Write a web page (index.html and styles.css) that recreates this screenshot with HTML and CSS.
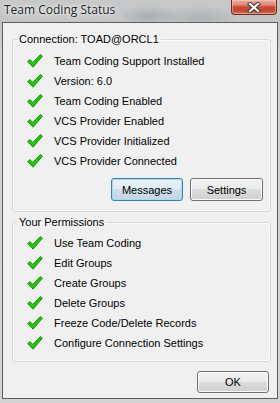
FILE: index.html
```html
<!DOCTYPE html>
<html>
<head>
<meta charset="utf-8">
<link rel="stylesheet" href="styles.css">
</head>
<body>
<div class="window">
  <div class="titlebar">
    <span class="title">Team Coding Status</span>
    <div class="close">
      <svg width="14" height="11" viewBox="0 0 14 11">
        <path d="M3 2 L11 9 M11 2 L3 9" stroke="#3b3b3b" stroke-width="4.2" stroke-linecap="square" fill="none"/>
        <path d="M3 2 L11 9 M11 2 L3 9" stroke="#ffffff" stroke-width="2.2" stroke-linecap="square" fill="none"/>
      </svg>
    </div>
  </div>
  <div class="client">
    <fieldset class="group group-conn">
      <legend>Connection: TOAD@ORCL1</legend>
      <div class="row"><svg class="check" viewBox="0 0 16 14"><path d="M0.6 7.6 L3 5.6 L5.8 8.4 L13.4 0.6 L15.4 2.2 L6 13.2 Z"/></svg><span>Team Coding Support Installed</span></div>
      <div class="row"><svg class="check" viewBox="0 0 16 14"><path d="M0.6 7.6 L3 5.6 L5.8 8.4 L13.4 0.6 L15.4 2.2 L6 13.2 Z"/></svg><span>Version: 6.0</span></div>
      <div class="row"><svg class="check" viewBox="0 0 16 14"><path d="M0.6 7.6 L3 5.6 L5.8 8.4 L13.4 0.6 L15.4 2.2 L6 13.2 Z"/></svg><span>Team Coding Enabled</span></div>
      <div class="row"><svg class="check" viewBox="0 0 16 14"><path d="M0.6 7.6 L3 5.6 L5.8 8.4 L13.4 0.6 L15.4 2.2 L6 13.2 Z"/></svg><span>VCS Provider Enabled</span></div>
      <div class="row"><svg class="check" viewBox="0 0 16 14"><path d="M0.6 7.6 L3 5.6 L5.8 8.4 L13.4 0.6 L15.4 2.2 L6 13.2 Z"/></svg><span>VCS Provider Initialized</span></div>
      <div class="row"><svg class="check" viewBox="0 0 16 14"><path d="M0.6 7.6 L3 5.6 L5.8 8.4 L13.4 0.6 L15.4 2.2 L6 13.2 Z"/></svg><span>VCS Provider Connected</span></div>
      <div class="buttons">
        <button class="btn btn-default">Messages</button>
        <button class="btn">Settings</button>
      </div>
    </fieldset>
    <fieldset class="group group-perm">
      <legend>Your Permissions</legend>
      <div class="row"><svg class="check" viewBox="0 0 16 14"><path d="M0.6 7.6 L3 5.6 L5.8 8.4 L13.4 0.6 L15.4 2.2 L6 13.2 Z"/></svg><span>Use Team Coding</span></div>
      <div class="row"><svg class="check" viewBox="0 0 16 14"><path d="M0.6 7.6 L3 5.6 L5.8 8.4 L13.4 0.6 L15.4 2.2 L6 13.2 Z"/></svg><span>Edit Groups</span></div>
      <div class="row"><svg class="check" viewBox="0 0 16 14"><path d="M0.6 7.6 L3 5.6 L5.8 8.4 L13.4 0.6 L15.4 2.2 L6 13.2 Z"/></svg><span>Create Groups</span></div>
      <div class="row"><svg class="check" viewBox="0 0 16 14"><path d="M0.6 7.6 L3 5.6 L5.8 8.4 L13.4 0.6 L15.4 2.2 L6 13.2 Z"/></svg><span>Delete Groups</span></div>
      <div class="row"><svg class="check" viewBox="0 0 16 14"><path d="M0.6 7.6 L3 5.6 L5.8 8.4 L13.4 0.6 L15.4 2.2 L6 13.2 Z"/></svg><span>Freeze Code/Delete Records</span></div>
      <div class="row"><svg class="check" viewBox="0 0 16 14"><path d="M0.6 7.6 L3 5.6 L5.8 8.4 L13.4 0.6 L15.4 2.2 L6 13.2 Z"/></svg><span>Configure Connection Settings</span></div>
    </fieldset>
    <div class="footer">
      <button class="btn btn-ok">OK</button>
    </div>
  </div>
</div>
</body>
</html>
```
FILE: styles.css
```css
html, body {
  margin: 0;
  padding: 0;
}
body {
  width: 280px;
  height: 403px;
  overflow: hidden;
  font-family: "Liberation Sans", Arial, sans-serif;
  font-size: 11px;
  color: #000;
}
.window {
  width: 280px;
  height: 403px;
  box-sizing: border-box;
  display: flex;
  flex-direction: column;
  background:
    radial-gradient(ellipse 30px 10px at 150px 16px, rgba(120,130,135,0.35), rgba(120,130,135,0)),
    radial-gradient(ellipse 40px 12px at 200px 18px, rgba(130,135,140,0.3), rgba(130,135,140,0)),
    linear-gradient(180deg, #c6c8c9 0px, #c2c4c5 22px, #cfd1d2 60px, #d2d3d4 100%);
}
.titlebar {
  height: 22px;
  display: flex;
  justify-content: space-between;
  align-items: flex-start;
  padding: 0 3px 0 4px;
  flex: none;
}
.title {
  font-family: "Open Sans", "Noto Sans", sans-serif;
  font-size: 12px;
  line-height: 20px;
  color: #1e1e1e;
  text-shadow: 0 0 6px #ffffff, 0 0 3px rgba(255,255,255,0.9);
}
.close {
  width: 46px;
  height: 15px;
  box-sizing: border-box;
  margin-left: auto;
  border: 1px solid #6b2a20;
  border-top: none;
  border-radius: 0 0 4px 4px;
  background: linear-gradient(180deg, #e9ab9c 0%, #de8b78 35%, #c64a34 50%, #c24630 75%, #d7725c 100%);
  box-shadow: inset 0 0 0 1px rgba(255,220,210,0.45);
  display: flex;
  align-items: center;
  justify-content: center;
}
.close svg {
  display: block;
}
.client {
  flex: 1;
  margin: 0 2px 4px 2px;
  border: 1px solid #5c5c5c;
  background: #f0f0f0;
  display: flex;
  flex-direction: column;
}
.group {
  border: 1px solid #d3d9dd;
  border-radius: 3px;
  box-shadow: inset 0 0 0 1px #fbfbfb;
  padding: 0;
  min-width: 0;
}
.group legend {
  margin-left: 4px;
  padding: 0 2px;
  line-height: 14px;
  height: 14px;
}
.group-conn {
  margin: 9px 6px 0 9px;
  padding: 5px 0 10px 0;
}
.group-perm {
  margin: 3px 6px 0 9px;
  padding: 4px 0 8px 0;
}
.row {
  height: 20px;
  display: flex;
  align-items: center;
  gap: 11px;
  padding-left: 14px;
}
.check {
  width: 16px;
  height: 14px;
  flex: none;
  fill: #25c40f;
  stroke: #0d8a05;
  stroke-width: 0.9;
  stroke-linejoin: round;
}
.buttons {
  display: flex;
  justify-content: flex-end;
  gap: 7px;
  margin-top: 7px;
  padding-right: 7px;
}
.btn {
  font-family: "Liberation Sans", Arial, sans-serif;
  font-size: 11px;
  color: #000;
  width: 73px;
  height: 23px;
  padding: 0;
  border: 1px solid #707070;
  border-radius: 3px;
  background: linear-gradient(180deg, #f2f2f2 0%, #ebebeb 50%, #dddddd 50%, #cfcfcf 100%);
  box-shadow: inset 0 0 0 1px #fbfbfb;
}
.btn-default {
  width: 72px;
  border-color: #3c7fb1;
  background: linear-gradient(180deg, #eaf2f7 0%, #dfeaf2 50%, #cfdfe9 50%, #c3d6e3 100%);
  box-shadow: inset 0 0 0 1px #a8d8f0;
}
.footer {
  display: flex;
  justify-content: flex-end;
  margin-top: 9px;
  padding-right: 8px;
}
.btn-ok {
  width: 72px;
  height: 22px;
}
```
